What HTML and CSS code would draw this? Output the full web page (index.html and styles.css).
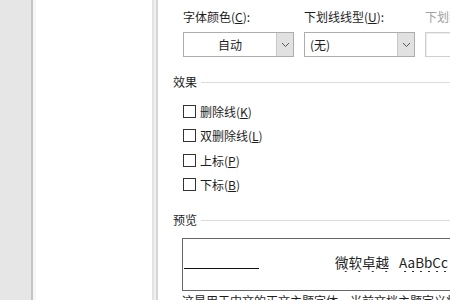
FILE: index.html
```html
<!DOCTYPE html>
<html lang="zh-CN">
<head>
    <meta charset="UTF-8">
    <title>字体</title>
    <link rel="stylesheet" href="styles.css">
</head>
<body>
    <div class="page">
        <div class="sidebar"></div>
        <div class="doc"></div>
        <div class="divider"></div>
        <div class="dialog">
            <div class="fields">
                <div class="field">
                    <div class="label">字体颜色(<u>C</u>):</div>
                    <div class="select center">
                        <span class="value">自动</span>
                        <span class="drop"><svg width="9" height="6" viewBox="0 0 9 6"><path d="M1 1l3.5 3.5L8 1" fill="none" stroke="#555" stroke-width="1"/></svg></span>
                    </div>
                </div>
                <div class="field">
                    <div class="label">下划线线型(<u>U</u>):</div>
                    <div class="select">
                        <span class="value">(无)</span>
                        <span class="drop"><svg width="9" height="6" viewBox="0 0 9 6"><path d="M1 1l3.5 3.5L8 1" fill="none" stroke="#555" stroke-width="1"/></svg></span>
                    </div>
                </div>
                <div class="field disabled">
                    <div class="label">下划线颜色(<u>I</u>):</div>
                    <div class="select"></div>
                </div>
            </div>

            <div class="heading"><span>效果</span></div>
            <div class="checks">
                <div class="check"><span class="box"></span>删除线(<u>K</u>)</div>
                <div class="check"><span class="box"></span>双删除线(<u>L</u>)</div>
                <div class="check"><span class="box"></span>上标(<u>P</u>)</div>
                <div class="check"><span class="box"></span>下标(<u>B</u>)</div>
            </div>

            <div class="heading preview-head"><span>预览</span></div>
            <div class="preview">
                <div class="rule"></div>
                <div class="sample">
                    <span>微软卓越</span>
                    <span>AaBbCc</span>
                </div>
            </div>
            <div class="note">这是用于中文的正文主题字体。当前文档主题定义将使用哪种字体。</div>
        </div>
    </div>
</body>
</html>
```

FILE: styles.css
```css
*{
    margin: 0;
    padding: 0;
    box-sizing: border-box;
}
body{
    width: 450px;
    height: 300px;
    overflow: hidden;
    background-color: #fff;
    font-family: "Noto Sans CJK SC", "Microsoft YaHei", sans-serif;
    font-size: 12px;
    color: #1e1e1e;
}
.page{
    display: flex;
    height: 300px;
}
.sidebar{
    width: 33px;
    flex-shrink: 0;
    background-color: #e6e6e6;
    border-right: 2px solid #c4c4c4;
}
.doc{
    width: 119px;
    flex-shrink: 0;
    background-color: #fff;
    border-left: 3px solid #f6f6f6;
}
.divider{
    width: 6px;
    flex-shrink: 0;
    background-color: #f0f0f0;
    border-left: 2px solid #e3e3e3;
    border-right: 2px solid #d6d6d6;
}
.dialog{
    flex: 1;
    min-width: 0;
    padding: 9px 0 0 15px;
    overflow: hidden;
}
.fields{
    display: flex;
    gap: 10px;
    padding-left: 10px;
}
.field{
    width: 111px;
    flex-shrink: 0;
}
.field .label{
    line-height: 16px;
    white-space: nowrap;
}
.select{
    display: flex;
    height: 25px;
    margin-top: 7px;
    border: 1px solid #adadad;
    background-color: #fff;
}
.select .value{
    flex: 1;
    line-height: 23px;
    padding-left: 5px;
}
.select.center .value{
    text-align: center;
    padding-left: 0;
}
.select .drop{
    width: 17px;
    display: flex;
    align-items: center;
    justify-content: center;
    background-color: #e1e1e1;
    border-left: 1px solid #c8c8c8;
}
.field.disabled .label{
    color: #a0a0a0;
}
.field.disabled .select{
    border-color: #cfcfcf;
    box-shadow: inset 1px 1px 0 #ececec;
}
.heading{
    display: flex;
    align-items: center;
    margin-top: 17px;
    line-height: 16px;
}
.heading::after{
    content: "";
    flex: 1;
    height: 1px;
    margin-left: 4px;
    background-color: #dcdcdc;
}
.checks{
    margin-top: 9px;
    padding-left: 10px;
}
.check{
    display: flex;
    align-items: center;
    height: 24.5px;
}
.check .box{
    width: 13px;
    height: 13px;
    margin-right: 4px;
    border: 1px solid #333;
    background-color: #fff;
}
.preview-head{
    margin-top: 15px;
}
.preview{
    display: flex;
    align-items: flex-start;
    width: 300px;
    height: 53px;
    margin: 10px 0 0 9px;
    border: 1px solid #666;
}
.preview .rule{
    width: 75px;
    height: 1px;
    margin: 29px 0 0 1px;
    background-color: #111;
}
.preview .sample{
    display: flex;
    gap: 10px;
    margin: 14px 0 0 76px;
    font-size: 13.5px;
    line-height: 18px;
    white-space: nowrap;
    color: #222;
}
.preview .sample span{
    padding-bottom: 2px;
    background-image: radial-gradient(circle, #333 0.9px, transparent 1.1px);
    background-size: 13.5px 3px;
    background-position: 4px bottom;
    background-repeat: repeat-x;
}
.preview .sample span + span{
    background-size: 8px 3px;
    background-position: 2px bottom;
}
.note{
    margin: 2px 0 0 9px;
    white-space: nowrap;
    line-height: 16px;
}
```
